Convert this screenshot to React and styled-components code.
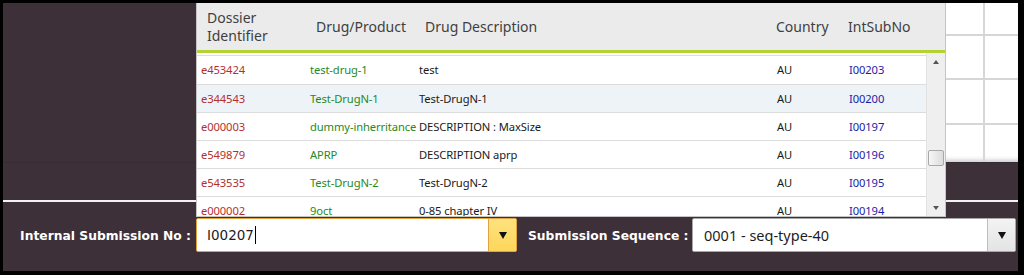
import React from "react";
import styled, { createGlobalStyle } from "styled-components";

const rows = [
	{ id: "e453424", drug: "test-drug-1", desc: "test", country: "AU", sub: "I00203" },
	{ id: "e344543", drug: "Test-DrugN-1", desc: "Test-DrugN-1", country: "AU", sub: "I00200", hover: true },
	{ id: "e000003", drug: "dummy-inherritance", desc: "DESCRIPTION : MaxSize", country: "AU", sub: "I00197" },
	{ id: "e549879", drug: "APRP", desc: "DESCRIPTION aprp", country: "AU", sub: "I00196" },
	{ id: "e543535", drug: "Test-DrugN-2", desc: "Test-DrugN-2", country: "AU", sub: "I00195" },
	{ id: "e000002", drug: "9oct", desc: "0-85 chapter IV", country: "AU", sub: "I00194" },
];

const App = () => {
	return (
		<>
			<GlobalStyle />
			<Frame>
				<Screen>
					<TopArea>
						<Spacer />
						<BackGrid>
							{[0, 1, 2, 3].map((r) => (
								<React.Fragment key={r}>
									<BackCell $row={r} />
									<BackCell $row={r} $last />
								</React.Fragment>
							))}
						</BackGrid>
					</TopArea>
					<MidStrip />
					<FormBar>
						<Label $width="176px">Internal Submission No :</Label>
						<Combo $active>
							<ComboText>
								I00207
								<Caret />
							</ComboText>
							<ComboButton $active>
								<Arrow />
							</ComboButton>
						</Combo>
						<Label $width="175px" $left>
							Submission Sequence :
						</Label>
						<Combo $wide>
							<ComboText $plain>0001 - seq-type-40</ComboText>
							<ComboButton>
								<Arrow />
							</ComboButton>
						</Combo>
					</FormBar>

					<Popup>
						<HeaderRow>
							<HeadCell>
								Dossier
								<br />
								Identifier
							</HeadCell>
							<HeadCell>Drug/Product</HeadCell>
							<HeadCell>Drug Description</HeadCell>
							<HeadCell>Country</HeadCell>
							<HeadCell>IntSubNo</HeadCell>
						</HeaderRow>
						<Body>
							<List>
								{rows.map((row) => (
									<Row key={row.id} $hover={row.hover}>
										<Cell $color="#b3302f">{row.id}</Cell>
										<Cell $color="#248a24">{row.drug}</Cell>
										<Cell $color="#1a1a1a">{row.desc}</Cell>
										<Cell $color="#1a1a1a">{row.country}</Cell>
										<Cell $color="#1c1ca6">{row.sub}</Cell>
									</Row>
								))}
							</List>
							<ScrollBar>
								<ScrollArrow />
								<Track>
									<Thumb />
								</Track>
								<ScrollArrow $down />
							</ScrollBar>
						</Body>
					</Popup>
				</Screen>
			</Frame>
		</>
	);
};

export default App;

const GlobalStyle = createGlobalStyle`
	body {
		margin: 0;
		background: #000;
	}
	* {
		box-sizing: border-box;
	}
`;

const Frame = styled.div`
	width: 1024px;
	height: 275px;
	padding: 3px 6px 4px 3px;
	background: #000;
`;

const Screen = styled.div`
	position: relative;
	height: 100%;
	display: flex;
	flex-direction: column;
	background-color: #3d3039;
	overflow: hidden;
`;

const TopArea = styled.div`
	height: 159px;
	display: flex;
`;

const Spacer = styled.div`
	flex: 1;
`;

const BackGrid = styled.div`
	width: 400px;
	display: grid;
	grid-template-columns: 1fr 33px;
	grid-template-rows: 33px 44px 45px 1fr;
	background: #fff;
	box-shadow: inset 0 -5px 4px -3px #c9c9c9;
`;

const BackCell = styled.div`
	border-right: ${(p) => (p.$last ? "none" : "2px solid #d6d6d6")};
	border-bottom: ${(p) => (p.$row < 3 ? "2px solid #d6d6d6" : "none")};
`;

const MidStrip = styled.div`
	height: 38px;
	border-top: 1px solid #382c34;
`;

const FormBar = styled.div`
	flex: 1;
	display: flex;
	align-items: flex-start;
	padding: 16px 0 0 17px;
	border-top: 2px solid #f2f2f2;
`;

const Label = styled.div`
	width: ${(p) => p.$width};
	height: 34px;
	display: flex;
	align-items: center;
	justify-content: ${(p) => (p.$left ? "flex-start" : "flex-end")};
	padding: ${(p) => (p.$left ? "1px 0 0 11px" : "1px 5px 0 0")};
	color: #fff;
	font-family: "DejaVu Sans", Verdana, sans-serif;
	font-weight: bold;
	font-size: 12.3px;
	white-space: nowrap;
`;

const Combo = styled.div`
	width: ${(p) => (p.$wide ? "324px" : "321px")};
	height: 34px;
	display: flex;
	background: #fff;
	border: 1px solid ${(p) => (p.$active ? "#e3a23e" : "#a7a7a7")};
	border-radius: 2px;
`;

const ComboText = styled.div`
	flex: 1;
	display: flex;
	align-items: center;
	padding-left: ${(p) => (p.$plain ? "11px" : "10px")};
	font-family: ${(p) => (p.$plain ? '"Noto Sans", sans-serif' : '"DejaVu Sans", Verdana, sans-serif')};
	font-size: ${(p) => (p.$plain ? "14.5px" : "13.5px")};
	color: #1d1d1d;
`;

const Caret = styled.span`
	display: inline-block;
	width: 1px;
	height: 18px;
	margin-left: 1px;
	background: #000;
`;

const ComboButton = styled.div`
	width: 28px;
	display: flex;
	align-items: center;
	justify-content: center;
	border-left: 1px solid ${(p) => (p.$active ? "#e3a23e" : "#bdbdbd")};
	background: ${(p) =>
		p.$active ? "linear-gradient(#ffe27e, #fdd65a)" : "linear-gradient(#f3f3f3, #e3e3e3)"};
`;

const Arrow = styled.span`
	width: 0;
	height: 0;
	border-left: 4px solid transparent;
	border-right: 4px solid transparent;
	border-top: 7px solid #111;
`;

const Popup = styled.div`
	position: absolute;
	left: 193px;
	top: 0;
	width: 750px;
	height: 214px;
	display: flex;
	flex-direction: column;
	background: #fff;
	border: 1px solid #c4c4c4;
	border-top: none;
	z-index: 10;
	overflow: hidden;
`;

const HeaderRow = styled.div`
	height: 50px;
	flex-shrink: 0;
	display: grid;
	grid-template-columns: 109px 109px 351px 72px 1fr;
	align-items: center;
	background: #ebebeb;
	border-bottom: 3px solid #b3d233;
`;

const HeadCell = styled.div`
	padding-left: 10px;
	font-family: "Noto Sans", sans-serif;
	font-size: 14px;
	line-height: 18px;
	color: #3f3f3f;
	white-space: nowrap;
`;

const Body = styled.div`
	flex: 1;
	display: flex;
	min-height: 0;
`;

const List = styled.div`
	flex: 1;
	padding-top: 2px;
	overflow: hidden;
`;

const Row = styled.div`
	display: grid;
	grid-template-columns: 109px 109px 358px 72px 1fr;
	align-items: center;
	height: 28px;
	flex-shrink: 0;
	border-top: 1px solid #dcdcdc;
	background: ${(p) => (p.$hover ? "#eef3f7" : "#fff")};
	&:first-child {
		height: 29px;
	}
`;

const Cell = styled.div`
	padding-left: 4px;
	color: ${(p) => p.$color};
	font-family: "Noto Sans", sans-serif;
	font-size: 11.2px;
	line-height: 12px;
	letter-spacing: -0.1px;
	white-space: nowrap;
`;

const ScrollBar = styled.div`
	width: 19px;
	display: flex;
	flex-direction: column;
	background: #efefef;
	border-left: 1px solid #e2e2e2;
`;

const ScrollArrow = styled.div`
	height: 17px;
	display: flex;
	align-items: center;
	justify-content: center;
	&::after {
		content: "";
		border-left: 3.5px solid transparent;
		border-right: 3.5px solid transparent;
		${(p) => (p.$down ? "border-top: 4px solid #555;" : "border-bottom: 4px solid #555;")}
	}
`;

const Track = styled.div`
	flex: 1;
	position: relative;
`;

const Thumb = styled.div`
	position: absolute;
	left: 1px;
	right: 1px;
	top: 80px;
	height: 16px;
	border: 1px solid #a9a9a9;
	border-radius: 2px;
	background: linear-gradient(90deg, #f6f6f6, #dcdcdc);
`;
